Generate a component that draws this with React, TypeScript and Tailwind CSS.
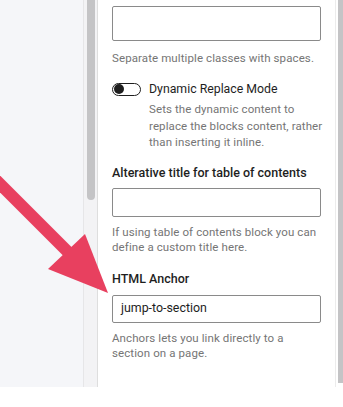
import React from "react";

const font = { fontFamily: 'Roboto, "Liberation Sans", Arial, sans-serif' };

export default function App() {
  return (
    <div className="relative w-[343px] h-[407px] bg-white overflow-hidden" style={font}>
      <div className="flex h-[387px]">
        <div className="w-[83px] bg-[#f5f6f9]" />
        <div className="w-[14px] bg-[#f3f3f5] border-l border-[#e6e6e8] flex justify-center">
          <div className="w-[8px] h-[200px] bg-[#c4c4c6] rounded-b-[4px]" />
        </div>
        <div className="w-[238px] bg-white border-l border-[#dedede] pl-[14px] pr-[14px]">
          <div className="mt-[6px] h-[35px] border border-[#8a8a8a] rounded-[2px]" />
          <p className="mt-[9px] text-[11.5px] leading-[16px] tracking-[0.1px] text-[#757575] whitespace-nowrap">Separate multiple classes with spaces.</p>
          <div className="mt-[15px] flex items-center gap-[8px]">
            <div className="w-[29px] h-[13px] rounded-full border border-[#1e1e1e] flex items-center pl-[1px]">
              <div className="w-[10px] h-[10px] rounded-full bg-[#1e1e1e]" />
            </div>
            <span className="text-[12.3px] leading-[16px] text-[#1e1e1e]">Dynamic Replace Mode</span>
          </div>
          <p className="mt-[4px] ml-[37px] text-[11.5px] leading-[16.5px] tracking-[0.1px] text-[#757575] whitespace-nowrap">
            Sets the dynamic content to<br />replace the blocks content, rather<br />than inserting it inline.
          </p>
          <div className="mt-[14px] text-[12.5px] leading-[16px] font-medium text-[#1e1e1e] whitespace-nowrap">Alterative title for table of contents</div>
          <div className="mt-[7px] h-[29px] border border-[#8a8a8a] rounded-[2px]" />
          <p className="mt-[8px] text-[11.5px] leading-[15.5px] tracking-[0.1px] text-[#757575] whitespace-nowrap">
            If using table of contents block you can<br />define a custom title here.
          </p>
          <div className="mt-[15px] text-[12.5px] leading-[16px] font-medium text-[#1e1e1e]">HTML Anchor</div>
          <div className="mt-[8px] h-[28px] border border-[#8a8a8a] rounded-[2px] flex items-center pl-[8px] text-[12.4px] text-[#1e1e1e]">
            jump-to-section
          </div>
          <p className="mt-[8px] text-[11.5px] leading-[15.5px] tracking-[0.1px] text-[#757575] whitespace-nowrap">
            Anchors lets you link directly to a<br />section on a page.
          </p>
        </div>
        <div className="w-[8px] bg-white border-l border-[#ececec] flex justify-end">
          <div className="w-[5px] h-[383px] bg-[#c4c4c6]" />
        </div>
      </div>
      <svg className="absolute left-0 top-0" width="343" height="407" viewBox="0 0 343 407">
        <line x1="-10" y1="174" x2="72" y2="256" stroke="#e8405f" strokeWidth="12" />
        <polygon points="48,269 85,234 108,293" fill="#e8405f" />
      </svg>
    </div>
  );
}
